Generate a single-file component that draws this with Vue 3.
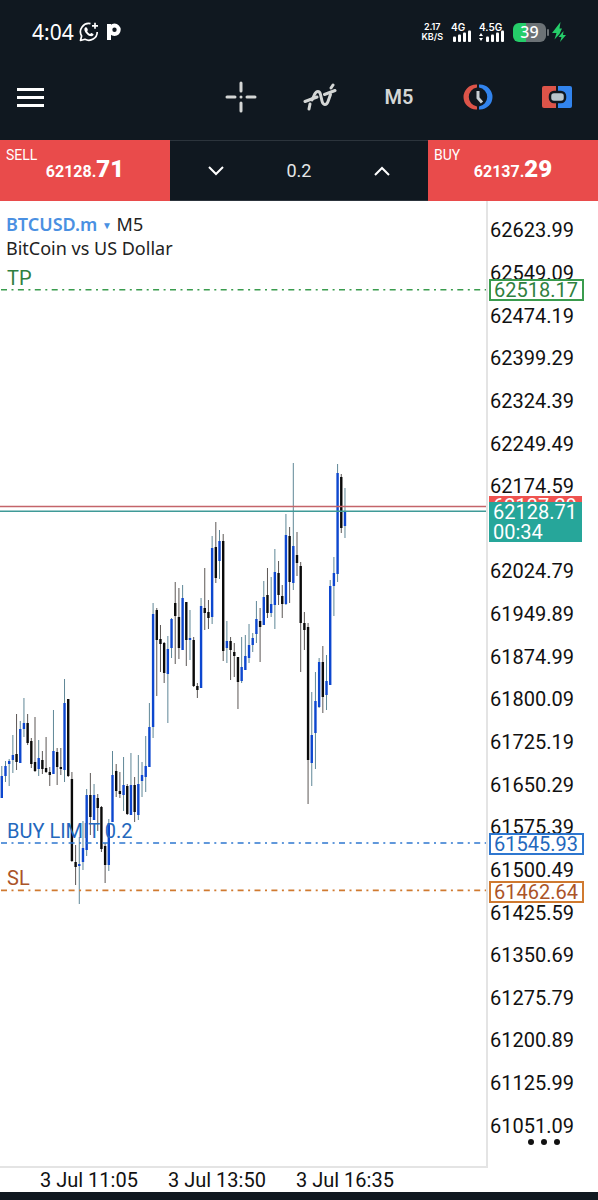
<template>
  <div class="app">
    <div class="status">
      <span class="clock">4:04</span>
      <svg class="wa" viewBox="0 0 20 20" width="20" height="20" fill="none" stroke="#fff">
        <path d="M11.5 1.7A8.3 8.3 0 0 0 2.6 14L1.5 18.5L6 17.3A8.3 8.3 0 0 0 18.2 10" stroke-width="1.7" stroke-linejoin="round" />
        <path d="M16 .8v6M13 3.8h6" stroke-width="1.7" />
        <path d="M6.1 5.5C5 6.6 5 8.8 7.6 11.7S13 14.8 14.3 13.3C14.8 12.5 14.5 12 13.9 11.7L12.4 11C11.8 10.8 11.5 12 11 11.9C9.8 11.5 8.5 10 8.2 9.2C8.2 8.8 9.1 8.4 8.8 7.7L8 5.8C7.7 5.1 6.7 5 6.1 5.5Z" fill="#fff" stroke="none" />
      </svg>
      <svg class="pay" viewBox="0 0 14 18" width="14" height="18">
        <circle cx="7.5" cy="6.8" r="4.2" fill="none" stroke="#fff" stroke-width="4" />
        <path d="M0 1h4v16H0z" fill="#fff" />
      </svg>
      <div class="net">
        <span>2.17</span>
        <span>KB/S</span>
      </div>
      <div class="signal" v-for="s in signals" :key="s.label">
        <span>{{ s.label }}</span>
        <svg :viewBox="`0 0 ${s.width} 12`" :width="s.width" height="12" fill="#fff">
          <path v-if="s.data" d="M0 6l2-3 2 3zM0 8l2 3 2-3z" />
          <rect v-for="n in 4" :key="n" :x="s.width - 23 + n * 5" :y="8.5 - n * 2" width="3" :height="3.5 + n * 2" rx="1" />
        </svg>
      </div>
      <div class="battery"><span>39</span></div>
      <svg class="bolt" viewBox="0 0 14 20" width="14" height="20" fill="#25cd69">
        <path d="M8.5 0L0 11h4.500L2.500 17.500l5-5.500L10 6.500H7.500z" />
        <path d="M11.500 9L6.500 15h3L8 20l6-7h-3z" />
      </svg>
    </div>

    <header class="toolbar">
      <button class="menu" aria-label="Menu"><i></i><i></i><i></i></button>
      <nav class="tools">
        <button aria-label="Crosshair">
          <svg viewBox="0 0 32 32" width="32" height="32" stroke="#d4d6d5" stroke-width="3" stroke-linecap="round">
            <path d="M16 2v8M16 22v8M2 16h8M22 16h8M16 16h.01" />
          </svg>
        </button>
        <button aria-label="Indicators">
          <svg viewBox="0 0 34 28" width="34" height="28" fill="none" stroke="#d4d6d5" stroke-width="3" stroke-linecap="round" stroke-linejoin="round">
            <path d="M6 26L7 21M9 17L11.500 11.500C13.500 7.500 16.500 7.500 17.500 11.500L19 18C20 22.500 23.500 22.500 25 18.500L27.500 11.500" />
            <path d="M2 18.500L14 14M21.500 11.500L32 7.500M28 5L30 2" />
          </svg>
        </button>
        <button class="period">M5</button>
        <button aria-label="Trading hours">
          <svg viewBox="0 0 32 28" width="32" height="28" fill="none">
            <path d="M15 1.500h-1A12.500 12.500 0 0 0 14 26.500h1V23.500A9.600 9.600 0 0 1 15 4.500z" fill="#dc5449" />
            <path d="M17 1.500h1A12.500 12.500 0 0 1 18 26.500h-1V23.500A9.600 9.600 0 0 0 17 4.500z" fill="#3284ee" />
            <path d="M16 8v7l4 4.500" stroke="#c9d0d5" stroke-width="3" />
          </svg>
        </button>
        <button aria-label="One click trading">
          <svg viewBox="0 0 32 24" width="32" height="24">
            <path d="M3 1h12v22H3a2 2 0 0 1-2-2V3a2 2 0 0 1 2-2z" fill="#dc5449" />
            <path d="M17 1h12a2 2 0 0 1 2 2v18a2 2 0 0 1-2 2H17z" fill="#3284ee" />
            <rect x="9" y="7" width="15" height="10" rx="4" fill="#b9c6cd" stroke="#101820" stroke-width="2.500" />
          </svg>
        </button>
      </nav>
    </header>

    <section class="trade">
      <button class="deal">
        <span class="side">SELL</span>
        <span class="quote">62128.<b>71</b></span>
      </button>
      <div class="volume">
        <button aria-label="Decrease volume">
          <svg viewBox="0 0 16 10" width="16" height="10" fill="none" stroke="#fff" stroke-width="2"><path d="M1 1l7 7 7-7" /></svg>
        </button>
        <input type="text" v-model="volume" aria-label="Volume" />
        <button aria-label="Increase volume">
          <svg viewBox="0 0 16 10" width="16" height="10" fill="none" stroke="#fff" stroke-width="2"><path d="M1 9l7-7 7 7" /></svg>
        </button>
      </div>
      <button class="deal">
        <span class="side">BUY</span>
        <span class="quote">62137.<b>29</b></span>
      </button>
    </section>

    <main class="chart">
      <div class="plot">
        <svg class="candles" viewBox="0 201 486 965" preserveAspectRatio="none">
          <g v-for="(c, i) in candles" :key="i">
            <line :x1="candleX(i)" :x2="candleX(i)" :y1="c[0]" :y2="c[1]" :stroke="c[4] ? '#5f8797' : '#5c5755'" stroke-width="1" />
            <rect :x="candleX(i) - 1.2" :y="c[2]" width="2.4" :height="c[3] - c[2]" :fill="c[4] ? '#0d47cf' : '#0a0a0a'" />
          </g>
          <line x1="0" x2="486" :y1="priceY(62137.29)" :y2="priceY(62137.29)" stroke="#c4646a" stroke-width="1.5" />
          <line x1="0" x2="486" :y1="priceY(62128.71)" :y2="priceY(62128.71)" stroke="#3f9a98" stroke-width="1.5" />
          <line
            v-for="o in orders" :key="o.name"
            x1="1" x2="486" :y1="priceY(o.price)" :y2="priceY(o.price)"
            :stroke="o.line" stroke-width="1.6" stroke-dasharray="6 4.5 2 4.4"
          />
        </svg>
        <div class="title">
          <div><a href="#" class="symbol">BTCUSD.m <small>▼</small></a> M5</div>
          <div>BitCoin vs US Dollar</div>
        </div>
        <span
          class="order" v-for="o in orders" :key="o.name"
          :style="{ top: percent(o.price), color: o.color }"
        >{{ o.name }}</span>
      </div>

      <div class="axis">
        <div class="scale">
          <span v-for="p in scale" :key="p">{{ p }}</span>
        </div>
        <span
          class="tag" v-for="o in orders" :key="o.name"
          :style="{ top: percent(o.price), color: o.color, borderColor: o.line }"
        >{{ o.price }}</span>
        <span class="tag ask" :style="{ top: percent(62137.29) }">62137.29</span>
        <span class="tag bid" :style="{ top: percent(62128.71) }">62128.71<br />00:34</span>
        <button class="more" aria-label="More"><i></i><i></i><i></i></button>
      </div>
    </main>

    <div class="times">
      <span v-for="t in times" :key="t">{{ t }}</span>
    </div>
  </div>
</template>

<script setup>
import { ref } from "vue";

const volume = ref("0.2");

const signals = [
  { label: "4G", width: 20, data: false },
  { label: "4.5G", width: 25, data: true },
];

const times = ["3 Jul 11:05", "3 Jul 13:50", "3 Jul 16:35"];

const orders = [
  { name: "TP", price: "62518.17", color: "#2f8040", line: "#3a9c4e" },
  { name: "BUY LIMIT 0.2", price: "61545.93", color: "#2468bd", line: "#2e77d0" },
  { name: "SL", price: "61462.64", color: "#ab5428", line: "#d07a30" },
];

// price scale, 74.90 per step; the step under the bid tag stays empty
const scale = Array.from({ length: 22 }, (_, i) => (i === 7 ? "" : (62623.99 - i * 74.9).toFixed(2)));

const priceY = (price) => 229.5 + ((62623.99 - price) / 74.9) * 42.62;
const percent = (price) => ((priceY(price) - 201) / 965) * 100 + "%";
const candleX = (i) => 1.8 + i * 3.69;

// high, low, body top, body bottom, 1 = up
const candles = [
  [766, 798, 776, 798, 1], [761, 782, 766, 776, 1], [759, 786, 761, 764, 1], [735, 773, 755, 760, 1],
  [714, 770, 754, 762, 0], [721, 763, 729, 763, 1], [698, 737, 723, 729, 1], [714, 745, 723, 743, 0],
  [738, 768, 741, 764, 0], [717, 772, 762, 771, 0], [740, 776, 758, 769, 1], [751, 774, 760, 769, 0],
  [737, 773, 768, 772, 0], [767, 786, 772, 775, 0], [710, 774, 751, 774, 1], [748, 785, 752, 767, 0],
  [748, 775, 767, 769, 0], [679, 782, 703, 770, 1], [699, 777, 699, 776, 0], [772, 862, 779, 861, 0],
  [845, 885, 862, 867, 0], [837, 904, 864, 866, 1], [821, 870, 848, 862, 1], [789, 856, 795, 850, 1],
  [773, 835, 795, 817, 0], [784, 820, 795, 820, 1], [794, 831, 798, 808, 0], [806, 852, 807, 849, 0],
  [843, 883, 846, 865, 0], [819, 871, 823, 865, 1], [751, 822, 775, 822, 1], [764, 797, 771, 791, 0],
  [772, 798, 791, 794, 0], [757, 811, 785, 795, 1], [784, 815, 786, 814, 0], [753, 815, 785, 815, 1],
  [777, 822, 785, 812, 0], [755, 820, 784, 815, 1], [762, 797, 775, 781, 1], [736, 792, 766, 777, 1],
  [703, 767, 727, 767, 1], [603, 738, 614, 727, 1], [608, 696, 610, 640, 0], [625, 672, 639, 644, 0],
  [642, 683, 643, 673, 0], [636, 723, 649, 674, 1], [618, 658, 619, 648, 1], [582, 664, 603, 616, 0],
  [588, 659, 617, 648, 0], [585, 650, 598, 650, 1], [602, 666, 602, 640, 0], [610, 660, 638, 640, 1],
  [637, 687, 640, 686, 0], [683, 698, 686, 690, 0], [598, 688, 606, 688, 1], [568, 630, 608, 613, 0],
  [600, 629, 612, 618, 0], [536, 624, 548, 617, 1], [522, 583, 547, 578, 0], [530, 579, 541, 561, 1],
  [534, 661, 541, 651, 0], [621, 663, 641, 648, 1], [637, 680, 641, 650, 0], [643, 677, 652, 656, 0],
  [657, 709, 657, 682, 0], [637, 683, 667, 681, 1], [635, 670, 656, 670, 1], [624, 663, 645, 658, 1],
  [633, 652, 638, 645, 1], [601, 643, 619, 634, 1], [608, 662, 621, 627, 0], [581, 625, 597, 625, 1],
  [568, 618, 595, 613, 0], [577, 617, 604, 613, 1], [549, 629, 572, 605, 1], [561, 605, 573, 595, 0],
  [585, 618, 596, 604, 0], [514, 605, 535, 604, 1], [527, 603, 536, 582, 0], [463, 590, 546, 583, 1],
  [532, 576, 555, 563, 0], [562, 672, 566, 623, 0], [612, 650, 623, 630, 0], [623, 804, 627, 760, 0],
  [692, 786, 735, 763, 1], [672, 769, 701, 733, 1], [658, 708, 662, 707, 1], [646, 713, 662, 697, 0],
  [655, 710, 681, 695, 1], [580, 685, 586, 685, 1], [557, 616, 573, 586, 1], [464, 582, 473, 574, 1],
  [474, 533, 477, 528, 0], [488, 538, 511, 526, 1],
];
</script>

<style>
body {
  margin: 0;
  background: #101820;
}
</style>

<style scoped>
.app {
  display: flex;
  flex-direction: column;
  box-sizing: border-box;
  min-height: 100vh;
  padding-bottom: 8px;
  background: #101820;
  color: #fff;
  font-family: Roboto, "Noto Sans", sans-serif;
}
button {
  display: flex;
  align-items: center;
  justify-content: center;
  padding: 0;
  border: 0;
  background: none;
  color: inherit;
  font-family: inherit;
  cursor: pointer;
}
svg {
  display: block;
  flex: none;
}
.status {
  display: flex;
  align-items: center;
  height: 64px;
  padding: 0 32px;
}
.clock {
  font: 21px "Noto Sans", sans-serif;
}
.wa {
  margin-left: 5px;
}
.pay {
  margin-left: 8px;
}
.net {
  display: flex;
  flex-direction: column;
  align-items: center;
  margin-left: auto;
  font: 600 9px/10px Inter, sans-serif;
}
.signal {
  display: flex;
  flex-direction: column;
  margin-left: 8px;
  font: 600 10px/8px Inter, sans-serif;
}
.signal svg {
  align-self: flex-end;
  margin-top: -1px;
}
.battery {
  position: relative;
  width: 33px;
  margin-left: 9px;
  border-radius: 6px;
  background: linear-gradient(90deg, #25cd69 39%, #6c7276 39%);
  font: 500 16px/19px "Noto Sans", sans-serif;
  text-align: center;
}
.battery::after {
  content: "";
  position: absolute;
  top: 6px;
  right: -3px;
  width: 2px;
  height: 7px;
  border-radius: 1px;
  background: #6c7276;
}
.bolt {
  margin-left: 6px;
}
.toolbar {
  display: flex;
  align-items: center;
  justify-content: space-between;
  height: 66px;
  padding: 0 17px 10px;
}
.menu {
  flex-direction: column;
  gap: 5px;
  height: 48px;
}
.menu i {
  width: 27px;
  height: 3px;
  background: #fff;
}
.tools {
  display: flex;
  gap: 31px;
}
.tools button {
  width: 48px;
  height: 48px;
}
.tools .period {
  color: #d4d6d5;
  font-size: 20px;
  font-weight: 600;
}
.trade {
  display: grid;
  grid-template-columns: minmax(0, 170fr) minmax(0, 258fr) minmax(0, 170fr);
  height: 61px;
}
.deal {
  position: relative;
  background: #e94b4b;
}
.side {
  position: absolute;
  top: 6px;
  left: 6px;
  font-size: 14px;
  line-height: 18px;
}
.quote {
  font: 700 16px/30px Roboto, sans-serif;
}
.quote b {
  font-size: 24px;
}
.volume {
  display: flex;
  align-items: center;
  padding: 0 34px;
  border: solid #2c343c;
  border-width: 1px 0;
}
.volume button {
  width: 24px;
  height: 40px;
}
.volume input {
  flex: 1;
  min-width: 0;
  padding: 0;
  border: 0;
  background: none;
  color: #e4e6e7;
  font: 18px Roboto, sans-serif;
  text-align: center;
}
.chart {
  display: grid;
  grid-template-columns: 1fr 110px;
  flex: 1;
  background: #fff;
  color: #111;
}
.plot {
  position: relative;
  border: solid #e4e4e4;
  border-width: 0 2px 2px 0;
}
.candles {
  position: absolute;
  inset: 0;
  width: 100%;
  height: 100%;
}
.title {
  position: relative;
  padding: 12px 6px;
  color: #222;
  font: 18px/23px "Noto Sans", sans-serif;
}
.symbol {
  color: #4a90e2;
  font-weight: 600;
  text-decoration: none;
}
.symbol small {
  font-size: 10px;
  vertical-align: 2px;
}
.order {
  position: absolute;
  left: 7px;
  margin-top: -24px;
  font-size: 20px;
  line-height: 24px;
}
.axis {
  position: relative;
  padding: 8px 0 21px;
  font-size: 20px;
}
.scale {
  display: flex;
  flex-direction: column;
  height: 100%;
}
.scale span {
  display: flex;
  flex: 1;
  align-items: center;
  padding-left: 2px;
}
.tag {
  position: absolute;
  left: 1px;
  box-sizing: border-box;
  width: 95px;
  margin-top: -11px;
  padding: 0 3px;
  border: 2px solid;
  background: #fff;
  line-height: 18px;
}
.tag.ask,
.tag.bid {
  width: 93px;
  padding: 0 4px;
  border: 0;
  background: #ef5350;
  color: #fff;
  line-height: 20px;
}
.tag.bid {
  margin-top: -10px;
  background: #26a69a;
}
.more {
  position: absolute;
  right: 38px;
  bottom: 18px;
  gap: 7px;
  height: 16px;
}
.more i {
  width: 6px;
  height: 6px;
  border-radius: 50%;
  background: #111;
}
.times {
  display: flex;
  padding-left: 40px;
  background: #fff;
  color: #111;
  font-size: 20px;
  line-height: 24px;
}
.times span {
  width: 128px;
}
</style>
